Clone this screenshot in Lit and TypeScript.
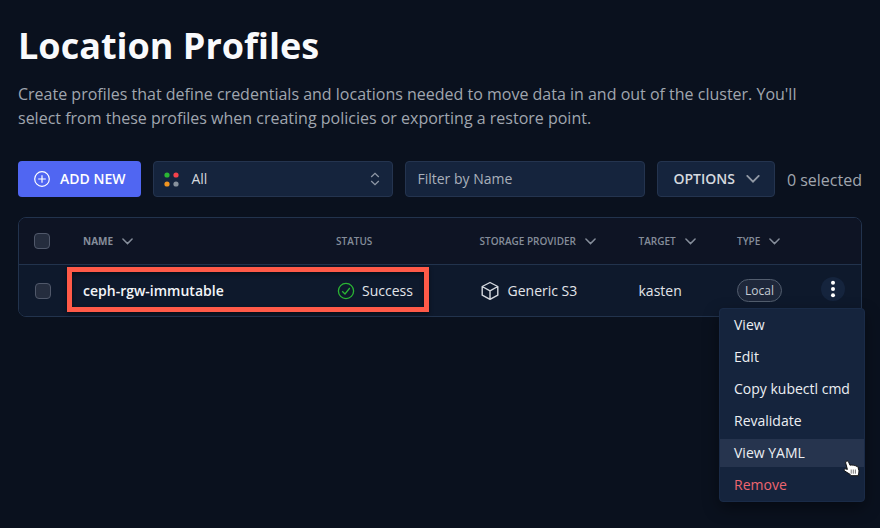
import { LitElement, html, css, svg } from "lit";
import { customElement } from "lit/decorators.js";
import { classMap } from "lit/directives/class-map.js";

const chevron = (w: number, h: number) => html`<svg class="chev" width=${w} height=${h} viewBox="0 0 12 7"><path d="M1 .8 6 5.8 11 .8" fill="none" stroke="currentColor" stroke-width="1.6" stroke-linecap="round" /></svg>`;

const dots = [
  [3, 3, "#2bb534"],
  [12, 3, "#f5414b"],
  [3, 12, "#f09420"],
  [12, 12, "#87919c"],
] as const;

const columns = [
  { label: "NAME", sort: true, active: true },
  { label: "STATUS", sort: false, active: false },
  { label: "STORAGE PROVIDER", sort: true, active: false },
  { label: "TARGET", sort: true, active: false },
  { label: "TYPE", sort: true, active: false },
];

const actions = ["View", "Edit", "Copy kubectl cmd", "Revalidate", "View YAML", "Remove"];

@customElement("app-root")
export class AppRoot extends LitElement {
  static styles = css`
    :host { display: block; position: relative; box-sizing: border-box; width: 880px; height: 528px; overflow: hidden; padding: 0 18px; background: #0a111e; color: #e2e5ea; font: 14px/20px "Open Sans", "Noto Sans", sans-serif; }
    * { box-sizing: border-box; }
    svg { display: block; flex: none; }
    h1 { margin: 0; padding-top: 20px; font-size: 36px; line-height: 52px; font-weight: 700; color: #f9fafc; white-space: nowrap; }
    p { margin: 10px 0 0; font-size: 16px; line-height: 24px; color: #a0a6af; white-space: nowrap; }
    .bar { display: flex; gap: 12px; margin-top: 31px; height: 36px; align-items: center; white-space: nowrap; }
    .add, .field, .options { display: flex; align-items: center; height: 36px; border-radius: 4px; }
    .add { width: 123px; padding-left: 16px; gap: 10px; background: #5066f2; color: #fff; font-weight: 600; }
    .field, .options { background: #15243d; border: 1px solid #24344f; }
    .field { width: 240px; padding: 0 11.5px; color: #a9b0bb; }
    .select { padding: 0 12px 0 10.5px; color: #d5d9df; }
    .select span { flex: 1; margin-left: 12px; }
    .updown { color: #8f98a6; }
    .options { width: 118px; padding-left: 15.5px; gap: 11px; font-weight: 600; color: #d5d9df; }
    .options .chev { color: #929aa6; }
    .count { font-size: 16px; color: #a0a6af; margin-top: 2px; }
    .table { margin-top: 20px; height: 100px; border: 1px solid #22334d; border-radius: 8px; overflow: hidden; }
    .row { display: grid; grid-template-columns: 64px 253px 143.5px 159px 98.5px 84px 1fr; align-items: center; white-space: nowrap; }
    .head { height: 47px; background: #0e1424; border-bottom: 1px solid #22334d; font-size: 10px; font-weight: 600; color: #858d9a; }
    .th { display: flex; align-items: center; gap: 9px; }
    .active { font-weight: 700; }
    .body { height: 51px; background: #0e192c; }
    .check { width: 16px; height: 16px; margin-left: 15px; border: 1px solid #50586a; border-radius: 4px; background: #252d3e; }
    .body .check { margin-left: 16px; }
    .name { font-weight: 600; color: #f3f5f8; }
    .cell { display: flex; align-items: center; }
    .status { gap: 7px; padding-left: 1px; }
    .provider { gap: 8px; }
    .pill { width: 45px; height: 23px; line-height: 21px; text-align: center; border: 1px solid #535e6f; border-radius: 12px; background: #1e273a; font-size: 12px; color: #c5cbd4; }
    .more { width: 24px; height: 24px; margin: -4px 0 0 0; border-radius: 50%; background: #15243d; }
    .mark { position: absolute; left: 67px; top: 267px; width: 362px; height: 45px; border: 5px solid #ff5a48; box-shadow: 0 2px 4px #0007, inset 0 2px 4px #0007; }
    .menu { position: absolute; left: 719px; top: 308px; width: 146px; height: 194px; padding-top: 2px; border: 1px solid #1a2b47; border-radius: 4px; background: #15243d; box-shadow: 0 6px 16px #0006; }
    .item { height: 28px; margin-bottom: 4px; padding: 4px 0 0 14px; white-space: nowrap; color: #eceff3; }
    .hover { background: #26344e; }
    .danger { color: #ee6670; }
    .cursor { position: absolute; left: 843px; top: 460px; }
  `;

  render() {
    return html`
      <h1>Location Profiles</h1>
      <p>Create profiles that define credentials and locations needed to move data in and out of the cluster. You'll<br />select from these profiles when creating policies or exporting a restore point.</p>
      <div class="bar">
        <div class="add">
          <svg width="16" height="16" viewBox="0 0 16 16" fill="none" stroke="currentColor" stroke-width="1.2"><circle cx="8" cy="8" r="7.3" /><path d="M8 4.2v7.6M4.2 8h7.6" /></svg>
          <span>ADD NEW</span>
        </div>
        <div class="field select">
          <svg width="15" height="15" viewBox="0 0 15 15">${dots.map(([x, y, c]) => svg`<circle cx=${x} cy=${y} r="2.6" fill=${c} />`)}</svg>
          <span>All</span>
          <svg class="updown" width="10" height="14" viewBox="0 0 10 14" fill="none" stroke="currentColor" stroke-width="1.3"><path d="M1.2 5 5 1.4 8.8 5M1.2 9 5 12.6 8.8 9" /></svg>
        </div>
        <div class="field">Filter by Name</div>
        <div class="options"><span>OPTIONS</span>${chevron(14, 8)}</div>
        <span class="count">0 selected</span>
      </div>
      <div class="table">
        <div class="row head">
          <span class="check"></span>
          ${columns.map((c) => html`<span class=${classMap({ th: true, active: c.active })}>${c.label}${c.sort ? chevron(11, 7) : ""}</span>`)}
        </div>
        <div class="row body">
          <span class="check"></span>
          <span class="name">ceph-rgw-immutable</span>
          <span class="cell status">
            <svg width="18" height="18" viewBox="0 0 18 18" fill="none" stroke="#2bb534" stroke-width="1.3"><circle cx="9" cy="9" r="7.6" /><path d="M5.2 9.3 8 12l4.8-6" /></svg>
            Success
          </span>
          <span class="cell provider">
            <svg width="20" height="20" viewBox="0 0 20 20" fill="none" stroke="#d5d9df" stroke-width="1.4" stroke-linejoin="round"><path d="M10 1.5 17.8 5.5v8.7L10 18.4 2.2 14.2V5.5zM2.2 5.5 10 9.8l7.8-4.3M10 9.8v8.6" /></svg>
            Generic S3
          </span>
          <span>kasten</span>
          <span class="pill">Local</span>
          <svg class="more" viewBox="0 0 24 24" fill="#fff"><circle cx="12" cy="5.8" r="2" /><circle cx="12" cy="12" r="2" /><circle cx="12" cy="18.2" r="2" /></svg>
        </div>
      </div>
      <div class="mark"></div>
      <div class="menu">
        ${actions.map((a) => html`<div class=${classMap({ item: true, hover: a === "View YAML", danger: a === "Remove" })}>${a}</div>`)}
      </div>
      <svg class="cursor" width="17" height="18" viewBox="0 0 17 18"><path d="M3.4 1.2c.9-.5 1.8 0 2.2.9l1.5 3.3c.6-.6 1.4-.6 2 0 .7-.6 1.5-.4 2 .3.8-.4 1.6-.1 2 .6 1-.2 1.7.2 2 1.2l.8 3.1c.2 1 0 2-.4 2.9l-.2 2.2H8l-.8-1.3-5.4-3.3c-1.3-1-.5-2.6 1.1-2.2l1.5.5-1.7-6.3c-.2-.8 0-1.5.7-1.9z" fill="#fff" stroke="#111" stroke-width="1" /><path d="M8.2 9.5v4.2M10.3 9.5v4.2M12.4 9.5v4.2" stroke="#555" stroke-width=".8" /></svg>
    `;
  }
}
